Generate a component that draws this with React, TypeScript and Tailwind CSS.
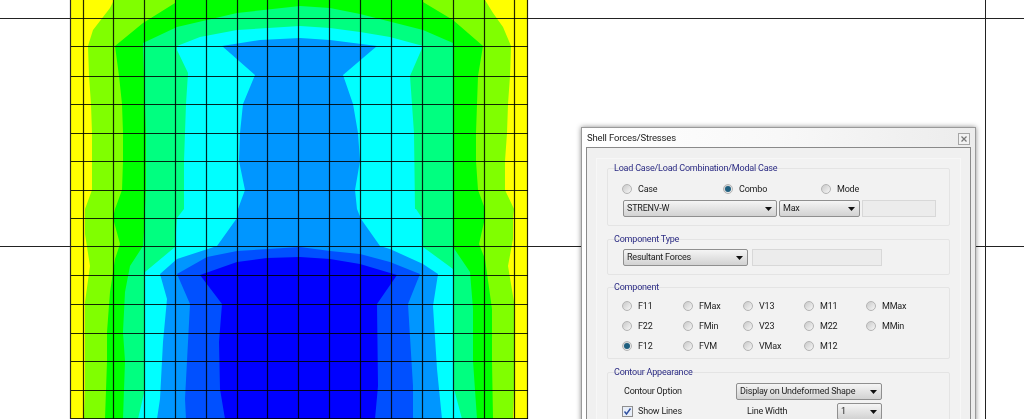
const gridX = [71, 84, 114, 145, 176, 207, 238, 268, 299, 330, 361, 392, 423, 454, 485, 515, 528];
const gridY = [18, 46, 76, 104, 133, 161, 190, 218, 246, 275, 304, 333, 361, 390, 418];

// contour bands, outermost first, traced from the plot
const bands = [
  {
    fill: "#80ff00",
    points:
      "114,0 110,8 93,30 88,46 89,76 91,104 92,133 92,161 92,190 85,209 85,218 85,234 90,266 85,302 85,333 85,361 85,390 84,419 513,419 514,390 514,361 514,333 514,302 508,266 513,239 513,218 514,209 505,190 505,161 507,133 508,104 510,76 511,46 503,27 493,13 485,0",
  },
  {
    fill: "#00ff00",
    points:
      "175,0 175,3 143,23 115,46 119,76 122,104 123,133 123,161 122,190 115,209 113,218 120,244 115,259 110,292 107,332 107,361 105,419 493,419 492,361 492,332 492,309 485,259 479,244 485,218 485,209 478,190 476,161 476,133 478,76 483,46 453,20 423,2 423,0",
  },
  {
    fill: "#00ff80",
    points:
      "143,43 177,27 237,13 300,6 330,8 360,14 423,30 453,43 453,209 453,218 453,247 470,272 473,309 473,361 477,419 123,419 125,361 123,332 125,292 130,266 143,246 145,218 145,209 146,190 146,133 144,76 143,47",
  },
  {
    fill: "#00ffff",
    points:
      "177,46 200,37 237,30 300,26 330,28 360,32 390,37 423,46 410,76 414,133 415,209 416,209 422,218 423,247 453,269 453,276 454,389 462,419 138,419 145,389 145,304 145,272 175,247 177,218 184,209 184,161 186,104 188,73 177,50",
  },
  {
    fill: "#0096ff",
    points:
      "222,46 260,40 300,38 330,40 377,46 343,75 353,104 358,133 360,161 355,190 357,209 361,219 380,246 390,249 423,264 438,274 433,306 437,369 442,419 157,419 160,399 163,342 167,299 160,274 177,259 217,246 237,218 238,209 245,190 239,161 240,133 243,104 255,75",
  },
  {
    fill: "#0050ff",
    points:
      "177,274 207,257 237,251 300,247 330,251 360,254 390,262 420,274 408,304 413,386 413,419 186,419 185,399 188,342 190,304",
  },
  {
    fill: "#0000ff",
    points:
      "200,275 237,262 267,258 300,257 330,259 360,264 397,275 377,304 378,386 375,419 225,419 220,389 219,342 222,304",
  },
];

function ContourPlot() {
  return (
    <svg className="absolute inset-0 blur-[0.35px]" width="1024" height="419" viewBox="0 0 1024 419">
      <rect x="71" y="0" width="457" height="419" fill="#ffff00" />
      {bands.map((band) => (
        <polygon key={band.fill} points={band.points} fill={band.fill} />
      ))}
      {gridX.map((x) => (
        <line key={x} x1={x - 0.5} y1="0" x2={x - 0.5} y2="419" stroke="#000" strokeOpacity="0.85" strokeWidth="1.2" />
      ))}
      {gridY.map((y) => (
        <line key={y} x1="71" y1={y + 0.5} x2="528" y2={y + 0.5} stroke="#000" strokeOpacity="0.85" strokeWidth="1.2" />
      ))}
      <line x1="0" y1="18.5" x2="71" y2="18.5" stroke="#222" />
      <line x1="528" y1="18.5" x2="1024" y2="18.5" stroke="#222" />
      <line x1="0" y1="246.5" x2="71" y2="246.5" stroke="#222" />
      <line x1="528" y1="246.5" x2="1024" y2="246.5" stroke="#222" />
      <line x1="985.5" y1="0" x2="985.5" y2="419" stroke="#222" />
    </svg>
  );
}

function Radio({ label, checked = false }: { label: string; checked?: boolean }) {
  return (
    <div className="flex h-[20px] items-center gap-[6px]">
      <span className="grid h-[10px] w-[10px] place-items-center rounded-full border border-[#b4b4b4] bg-gradient-to-br from-[#c9c9c9] to-[#f7f7f7]">
        {checked && <span className="h-[6px] w-[6px] rounded-full bg-[#1f5f7f]" />}
      </span>
      <span>{label}</span>
    </div>
  );
}

function Select({ label, className }: { label: string; className: string }) {
  return (
    <div
      className={`flex h-[17px] items-center justify-between rounded-[2px] border border-[#8f8f8f] bg-gradient-to-b from-[#f5f5f5] to-[#d2d2d2] pl-[3px] pr-[4px] ${className}`}
    >
      <span className="whitespace-nowrap">{label}</span>
      <svg width="7" height="4" viewBox="0 0 7 4">
        <path d="M0 0H7L3.5 4Z" fill="#111" />
      </svg>
    </div>
  );
}

function Group({ title, className, children }: { title: string; className: string; children: React.ReactNode }) {
  return (
    <section className={`rounded-[2px] border border-[#e4e4e4] pl-[15px] ${className}`}>
      <h3 className="-ml-[9px] -mt-[7px] h-[13px] whitespace-nowrap text-[9px] leading-[13px] font-normal tracking-[-0.2px] text-[#2c2c84]">
        {title}
      </h3>
      {children}
    </section>
  );
}

export default function App() {
  return (
    <div className="relative h-[419px] w-[1024px] overflow-hidden bg-white">
      <ContourPlot />

      <div className="absolute left-[581px] top-[127px] h-[310px] w-[395px] border border-[#9a9a9a] bg-gradient-to-r from-white via-[#f8f8f8] to-[#ececec] px-[4px] font-['Roboto',sans-serif] text-[9px] leading-[13px] tracking-[-0.2px] text-[#222] shadow-[0_0_5px_rgba(0,0,0,0.45)] blur-[0.3px]">
        <header className="flex h-[19px] items-center justify-between">
          <span className="ml-[1px] text-[9.5px] tracking-[-0.15px]">Shell Forces/Stresses</span>
          <button className="mr-[1px] mt-[2px] grid h-[12px] w-[12px] place-items-center border border-[#a6a6a6] bg-[#f2f2f2]">
            <svg width="6" height="6" viewBox="0 0 6 6">
              <path d="M0.5 0.5L5.5 5.5M5.5 0.5L0.5 5.5" stroke="#777" strokeWidth="1.2" />
            </svg>
          </button>
        </header>

        <div className="h-[300px] border border-[#8a8a8a] bg-[#f0f0f0] px-[9px] pt-[10px]">
          <div className="h-[280px] border border-[#f7f7f7] bg-[#f2f2f2] px-[10px] pt-[9px]">
            <Group title="Load Case/Load Combination/Modal Case" className="h-[58px]">
              <div className="-ml-[1px] mt-[4px] grid grid-cols-[101px_98px_auto]">
                <Radio label="Case" />
                <Radio label="Combo" checked />
                <Radio label="Mode" />
              </div>
              <div className="mt-[1px] flex gap-[2px]">
                <Select label="STRENV-W" className="w-[154px]" />
                <Select label="Max" className="w-[81px]" />
                <div className="h-[17px] w-[74px] border border-[#d8d8d8] bg-[#ececec]" />
              </div>
            </Group>

            <Group title="Component Type" className="mt-[13px] h-[36px]">
              <div className="mt-[3px] flex gap-[4px]">
                <Select label="Resultant Forces" className="w-[125px]" />
                <div className="h-[17px] w-[130px] border border-[#d8d8d8] bg-[#ececec]" />
              </div>
            </Group>

            <Group title="Component" className="mt-[12px] h-[72px]">
              <div className="-ml-[1px] mt-[2px] grid grid-cols-[61px_60px_61px_62px_auto]">
                <Radio label="F11" />
                <Radio label="FMax" />
                <Radio label="V13" />
                <Radio label="M11" />
                <Radio label="MMax" />
                <Radio label="F22" />
                <Radio label="FMin" />
                <Radio label="V23" />
                <Radio label="M22" />
                <Radio label="MMin" />
                <Radio label="F12" checked />
                <Radio label="FVM" />
                <Radio label="VMax" />
                <Radio label="M12" />
              </div>
            </Group>

            <Group title="Contour Appearance" className="mt-[13px] h-[60px]">
              <div className="mt-[4px] flex h-[17px] items-center">
                <span className="ml-[1px] w-[112px]">Contour Option</span>
                <Select label="Display on Undeformed Shape" className="w-[146px]" />
              </div>
              <div className="mt-[3px] flex h-[17px] items-center">
                <span className="-ml-[1px] mr-[5px] grid h-[11px] w-[11px] place-items-center border border-[#8f8f8f] bg-[#e8eef8]">
                  <svg width="9" height="9" viewBox="0 0 9 9">
                    <path d="M1.5 4.5L3.5 7L7.5 1.5" fill="none" stroke="#2f4f9f" strokeWidth="1.4" />
                  </svg>
                </span>
                <span className="w-[109px]">Show Lines</span>
                <span className="w-[90px]">Line Width</span>
                <Select label="1" className="w-[45px]" />
              </div>
            </Group>
          </div>
        </div>
      </div>
    </div>
  );
}
